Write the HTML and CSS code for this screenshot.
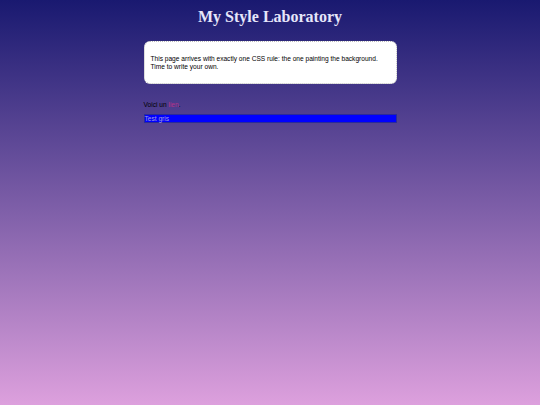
FILE: index.html
```html
<!DOCTYPE html>
<html>
<head>
<meta charset="utf-8">
<link rel="stylesheet" href="styles.css">
</head>
<body>
<h1 class="title">My Style Laboratory</h1>
<main class="wrap">
  <div class="card">
    <p>This page arrives with exactly one CSS rule: the one painting the background. Time to write your own.</p>
  </div>
  <p class="line">Voici un <a href="#" class="link">lien</a>.</p>
  <div class="gray">Test gris</div>
</main>
</body>
</html>
```
FILE: styles.css
```css
html { height: 100%; }
body {
  margin: 0;
  min-height: 100%;
  background: linear-gradient(#191970, #dda0dd);
  font-family: "Liberation Sans", Arial, sans-serif;
  font-size: 6.6px;
  color: #000;
}
.title {
  margin: 0;
  padding-top: 7px;
  text-align: center;
  font-family: "Liberation Serif", "DejaVu Serif", serif;
  font-size: 16px;
  font-weight: bold;
  color: #e6e6fa;
  line-height: 20px;
}
.wrap {
  width: 253px;
  margin: 14px auto 0;
}
.card {
  background: #fff;
  border: 1px dotted #bbb;
  border-radius: 6px;
  padding: 13px 6px 12px 6px;
}
.card p { margin: 0; line-height: 8px; }
.line { margin: 17px 0 0; line-height: 8px; }
.link { color: #b8328a; text-decoration: none; }
.gray {
  margin-top: 5px;
  background: #0000ff;
  border: 1px solid #2a2a9a;
  color: #a49ce0;
  line-height: 7px;
}
```
